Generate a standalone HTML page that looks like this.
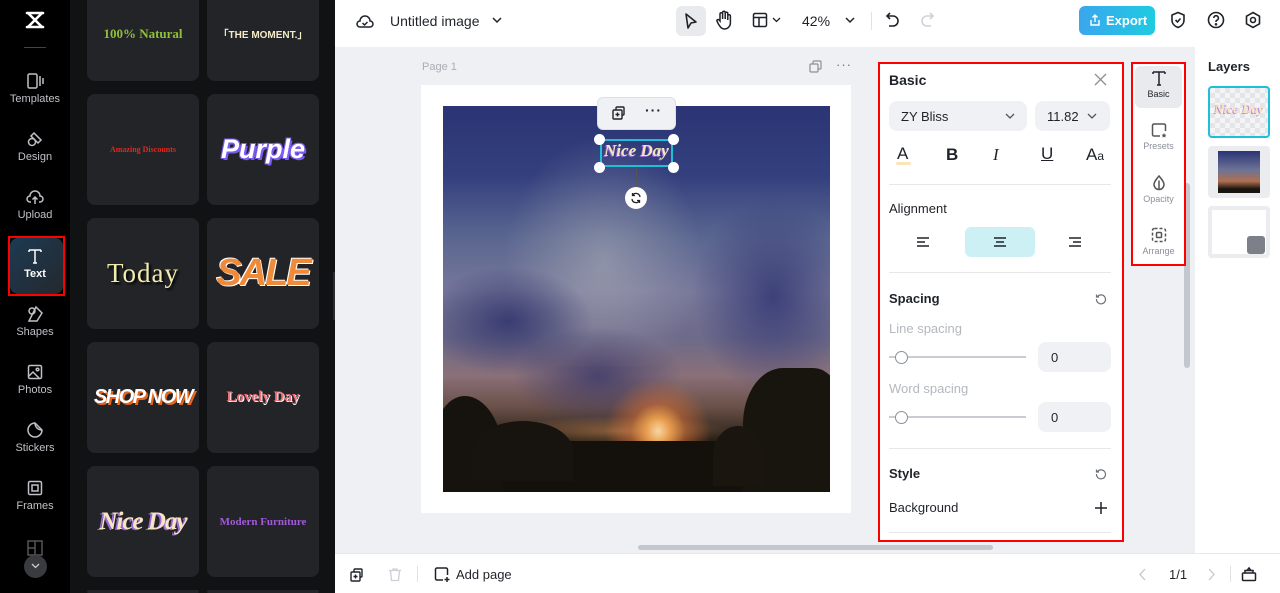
<!DOCTYPE html>
<html style="width:1280px;height:593px;overflow:hidden"><head><meta charset="utf-8"><style>
*{box-sizing:border-box;margin:0;padding:0}
body{width:1280px;height:593px;overflow:hidden;position:relative;font-family:"Liberation Sans",sans-serif;background:#fff}
.a{position:absolute}
.nav{left:0;top:0;width:70px;height:593px;background:#000}
.ni{position:absolute;left:0;width:70px;text-align:center;color:#bfc1c6;font-size:11px}
.ni svg{display:block;margin:0 auto 3px}
.panel{left:70px;top:0;width:265px;height:593px;background:#111214;overflow:hidden}
.card{position:absolute;width:112px;height:111px;background:#232428;border-radius:8px;display:flex;align-items:center;justify-content:center;text-align:center}
.top{left:335px;top:0;width:945px;height:47px;background:#fff}
.canvas{left:335px;top:47px;width:860px;height:506px;background:#eef0f3;overflow:hidden}
.bot{left:335px;top:553px;width:945px;height:40px;background:#fff;border-top:1px solid #e6e8eb}
.prop{left:878px;top:62px;width:246px;height:480px;background:#fff;border:2px solid #f00}
.lbl{position:absolute;font-size:13px;color:#1f2329}
.hr{position:absolute;left:9px;width:222px;height:1px;background:#e5e7eb}
.box{position:absolute;background:#eff1f4;border-radius:8px;font-size:13px;color:#1f2329}
.sl{position:absolute;left:9px;width:137px;height:2px;background:#c9ccd3}
.knob{position:absolute;width:13px;height:13px;border-radius:50%;background:#fff;border:1px solid #8a8f99}
.tabs{left:1131px;top:62px;width:55px;height:204px;background:#fff;border:2px solid #f00}
.tab{position:absolute;left:2px;width:47px;text-align:center;font-size:9px;color:#8a8f99}
.tab svg{display:block;margin:0 auto 2px}
</style></head><body>

<!-- left nav -->
<div class="a nav">
  <svg class="a" style="left:24px;top:10px" width="22" height="20" viewBox="0 0 22 20"><path d="M3 3h16M3 17h16M4 3l14 14M18 3L4 17" stroke="#fff" stroke-width="2.6" fill="none" stroke-linecap="round"/></svg>
  <div class="a" style="left:24px;top:47px;width:22px;height:1px;background:#444"></div>
  <div class="ni" style="top:72px"><svg width="18" height="18" viewBox="0 0 18 18" fill="none" stroke="#bfc1c6" stroke-width="1.5"><rect x="2" y="2" width="9" height="14" rx="1.5"/><path d="M14 4v10M17 6v6"/></svg>Templates</div>
  <div class="ni" style="top:130px"><svg width="18" height="18" viewBox="0 0 18 18" fill="none" stroke="#bfc1c6" stroke-width="1.5"><circle cx="6" cy="12" r="3.5"/><path d="M8 3l7 7-3 3-7-7z"/></svg>Design</div>
  <div class="ni" style="top:188px"><svg width="18" height="18" viewBox="0 0 18 18" fill="none" stroke="#bfc1c6" stroke-width="1.5"><path d="M5 14H4a3 3 0 0 1 0-6 5 5 0 0 1 10 0 3 3 0 0 1 0 6h-1M9 16V9M6.5 11.5L9 9l2.5 2.5"/></svg>Upload</div>
  <div class="a" style="left:8px;top:236px;width:57px;height:60px;border:2px solid #f00"></div>
  <div class="a" style="left:10px;top:238px;width:53px;height:56px;border-radius:8px;background:linear-gradient(135deg,#1d3a52,#24282e)"></div>
  <div class="ni" style="top:247px;color:#fff;font-weight:bold"><svg width="18" height="18" viewBox="0 0 18 18" fill="none" stroke="#fff" stroke-width="1.5"><path d="M3 3h12M9 3v13M3 3v2M15 3v2M7 16h4"/></svg>Text</div>
  <div class="ni" style="top:305px"><svg width="18" height="18" viewBox="0 0 18 18" fill="none" stroke="#bfc1c6" stroke-width="1.5"><path d="M10 2l6 6-5 8H3z"/><circle cx="6" cy="6" r="3"/></svg>Shapes</div>
  <div class="ni" style="top:363px"><svg width="18" height="18" viewBox="0 0 18 18" fill="none" stroke="#bfc1c6" stroke-width="1.5"><rect x="2.5" y="2.5" width="13" height="13" rx="1.5"/><path d="M3 13l4-4 6 6"/><circle cx="11.5" cy="6.5" r="1.3"/></svg>Photos</div>
  <div class="ni" style="top:421px"><svg width="18" height="18" viewBox="0 0 18 18" fill="none" stroke="#bfc1c6" stroke-width="1.5"><path d="M16 9A7 7 0 1 1 9 2l7 7z"/><path d="M9 2c0 4 3 7 7 7"/></svg>Stickers</div>
  <div class="ni" style="top:479px"><svg width="18" height="18" viewBox="0 0 18 18" fill="none" stroke="#bfc1c6" stroke-width="1.5"><rect x="2.5" y="2.5" width="13" height="13" rx="1.5"/><rect x="6" y="6" width="6" height="6"/></svg>Frames</div>
  <svg class="a" style="left:27px;top:540px" width="16" height="16" viewBox="0 0 16 16" fill="none" stroke="#555" stroke-width="1.5"><rect x="1" y="1" width="14" height="14"/><path d="M8 1v14M1 8h7"/></svg>
  <div class="a" style="left:24px;top:555px;width:23px;height:23px;border-radius:50%;background:#3a3b40"></div>
  <svg class="a" style="left:31px;top:563px" width="9" height="6" viewBox="0 0 9 6"><path d="M1 1l3.5 3.5L8 1" stroke="#ccc" stroke-width="1.3" fill="none"/></svg>
</div>

<!-- text template panel -->
<div class="a panel">
  <div class="card" style="left:17px;top:-30px;padding-top:56px"><span style="font-family:'Liberation Serif',serif;font-weight:bold;color:#8fc03a;font-size:13px;align-self:flex-start">100% Natural</span></div>
  <div class="card" style="left:137px;top:-30px;padding-top:56px"><span style="font-weight:bold;color:#f3ecc8;font-size:10px;align-self:flex-start">「THE MOMENT.」</span></div>
  <div class="card" style="left:17px;top:94px"><span style="font-family:'Liberation Serif',serif;font-weight:bold;color:#e0281e;font-size:8px">Amazing Discounts</span></div>
  <div class="card" style="left:137px;top:94px"><span style="font-weight:bold;font-style:italic;color:#fff;font-size:27px;text-shadow:2px 2px 0 #7b5cf0,-1px -1px 0 #7b5cf0,1px -1px 0 #7b5cf0,-1px 1px 0 #7b5cf0">Purple</span></div>
  <div class="card" style="left:17px;top:218px"><span style="font-family:'Liberation Serif',serif;color:#f3ecb0;font-size:27px;letter-spacing:1px;text-shadow:2px 2px 2px #000">Today</span></div>
  <div class="card" style="left:137px;top:218px"><span style="font-weight:bold;font-style:italic;color:#ef8a3a;font-size:38px;letter-spacing:-2px;text-shadow:1px 1px 0 #fff,-1px -1px 0 #fff">SALE</span></div>
  <div class="card" style="left:17px;top:342px"><span style="font-weight:bold;font-style:italic;color:#fff;font-size:20px;letter-spacing:-1.5px;text-shadow:2px 2px 0 #e9651a">SHOP NOW</span></div>
  <div class="card" style="left:137px;top:342px"><span style="font-family:'Liberation Serif',serif;font-weight:bold;color:#f16f77;font-size:15px;text-shadow:1px 1px 0 #fff">Lovely Day</span></div>
  <div class="card" style="left:17px;top:466px"><span style="font-family:'Liberation Serif',serif;font-weight:bold;font-style:italic;color:#f6e5c0;font-size:25px;letter-spacing:-1px;text-shadow:-2px 1px 0 #9a6ad8">Nice Day</span></div>
  <div class="card" style="left:137px;top:466px"><span style="font-family:'Liberation Serif',serif;font-weight:bold;color:#a259d9;font-size:11px">Modern Furniture</span></div>
  <div class="card" style="left:17px;top:590px;height:3px"></div>
  <div class="card" style="left:137px;top:590px;height:3px"></div>
</div>
<div class="a" style="left:333px;top:272px;width:7px;height:48px;background:#2a2b2f;border-radius:0 4px 4px 0"></div>

<!-- top bar -->
<div class="a top">
  <svg class="a" style="left:21px;top:12px" width="18" height="18" viewBox="0 0 18 18" fill="none" stroke="#1f2329" stroke-width="1.5"><path d="M5 15H4a3 3 0 0 1 0-6 5 5 0 0 1 10 0 3 3 0 0 1 0 6H5z"/><path d="M6.5 11l2 2 3-3"/></svg>
  <div class="a" style="left:55px;top:13px;font-size:14px;color:#1f2329">Untitled image</div>
  <svg class="a" style="left:157px;top:17px" width="10" height="7" viewBox="0 0 10 7"><path d="M1 1l4 4 4-4" stroke="#1f2329" stroke-width="1.5" fill="none"/></svg>
  <div class="a" style="left:341px;top:6px;width:30px;height:30px;border-radius:6px;background:#e8eaee"></div>
  <svg class="a" style="left:348px;top:12px" width="16" height="18" viewBox="0 0 16 18"><path d="M3 2l10 8-5 1-3 5z" stroke="#1f2329" stroke-width="1.6" fill="none" stroke-linejoin="round"/></svg>
  <svg class="a" style="left:380px;top:10px" width="18" height="20" viewBox="0 0 18 20" fill="none" stroke="#1f2329" stroke-width="1.5"><path d="M5 11V4a1.3 1.3 0 0 1 2.6 0v5V2.5a1.3 1.3 0 0 1 2.6 0V9V3.5a1.3 1.3 0 0 1 2.6 0V10V6a1.3 1.3 0 0 1 2.6 0v7a6 6 0 0 1-6 6c-3 0-4-2-6-5l-1.5-3a1.3 1.3 0 0 1 2.3-1z"/></svg>
  <svg class="a" style="left:417px;top:12px" width="16" height="16" viewBox="0 0 16 16" fill="none" stroke="#1f2329" stroke-width="1.5"><rect x="1.5" y="1.5" width="13" height="13" rx="1.5"/><path d="M1.5 5.5h13M7 5.5v9"/></svg>
  <svg class="a" style="left:437px;top:17px" width="9" height="6" viewBox="0 0 9 6"><path d="M1 1l3.5 3.5L8 1" stroke="#1f2329" stroke-width="1.3" fill="none"/></svg>
  <div class="a" style="left:467px;top:13px;font-size:14px;color:#1f2329">42%</div>
  <svg class="a" style="left:510px;top:17px" width="10" height="7" viewBox="0 0 10 7"><path d="M1 1l4 4 4-4" stroke="#1f2329" stroke-width="1.5" fill="none"/></svg>
  <div class="a" style="left:536px;top:12px;width:1px;height:18px;background:#e0e2e6"></div>
  <svg class="a" style="left:550px;top:11px" width="16" height="18" viewBox="0 0 16 18" fill="none" stroke="#1f2329" stroke-width="1.6"><path d="M5 2L2 5l3 3M2 5h6a5 5 0 0 1 0 10H4"/></svg>
  <svg class="a" style="left:584px;top:11px" width="16" height="18" viewBox="0 0 16 18" fill="none" stroke="#cfd2d8" stroke-width="1.6"><path d="M11 2l3 3-3 3M14 5H8a5 5 0 0 0 0 10h4"/></svg>
  <div class="a" style="left:744px;top:6px;width:76px;height:29px;border-radius:6px;background:linear-gradient(90deg,#3aa6ee,#1ecbe1);color:#fff;font-size:13px;font-weight:bold;padding:7px 0 0 27px">Export</div>
  <svg class="a" style="left:754px;top:13px" width="12" height="14" viewBox="0 0 12 14" fill="none" stroke="#fff" stroke-width="1.4"><path d="M6 9V2M3.5 4.5L6 2l2.5 2.5M2 7v5h8V7"/></svg>
  <svg class="a" style="left:835px;top:11px" width="16" height="18" viewBox="0 0 16 18" fill="none" stroke="#1f2329" stroke-width="1.6"><path d="M8 1.5l6 2.5v5c0 4-3 6.5-6 7.5-3-1-6-3.5-6-7.5V4z"/><path d="M5.5 9l2 2 3-3.5"/></svg>
  <svg class="a" style="left:872px;top:11px" width="18" height="18" viewBox="0 0 18 18" fill="none" stroke="#1f2329" stroke-width="1.6"><circle cx="9" cy="9" r="7.5"/><path d="M6.8 7a2.3 2.3 0 1 1 3 2.2c-.6.3-.8.7-.8 1.3v.5"/><circle cx="9" cy="13.3" r=".5" fill="#1f2329"/></svg>
  <svg class="a" style="left:909px;top:11px" width="18" height="18" viewBox="0 0 18 18" fill="none" stroke="#1f2329" stroke-width="1.6"><path d="M9 1.5l6.5 3.7v7.6L9 16.5l-6.5-3.7V5.2z"/><circle cx="9" cy="9" r="2.5"/></svg>
</div>

<!-- canvas -->
<div class="a canvas">
  <div class="a" style="left:87px;top:14px;font-size:11px;color:#a9adb5">Page 1</div>
  <svg class="a" style="left:474px;top:13px" width="13" height="13" viewBox="0 0 13 13" fill="none" stroke="#8a8f99" stroke-width="1.2"><rect x="1" y="4" width="8" height="8" rx="1"/><path d="M4 4V2a1 1 0 0 1 1-1h6a1 1 0 0 1 1 1v6a1 1 0 0 1-1 1H9"/></svg>
  <div class="a" style="left:501px;top:10px;font-size:13px;color:#6b7079;letter-spacing:1px">···</div>
  <div class="a" style="left:86px;top:38px;width:430px;height:428px;background:#fff"></div>
  <div class="a" style="left:108px;top:59px;width:387px;height:386px;overflow:hidden;background:linear-gradient(180deg,#2b3474 0%,#34407e 18%,#5a6690 34%,#76779a 48%,#6d6a8a 60%,#8a7078 70%,#6a5048 78%,#2a2218 86%,#16130e 100%)">
    <div class="a" style="left:60px;top:30px;width:200px;height:230px;background:radial-gradient(ellipse at 50% 55%,rgba(190,190,190,.45),transparent 70%)"></div>
    <div class="a" style="left:250px;top:90px;width:160px;height:200px;background:radial-gradient(ellipse,rgba(50,55,115,.85),transparent 70%)"></div>
    <div class="a" style="left:-20px;top:160px;width:170px;height:110px;background:radial-gradient(ellipse,rgba(48,52,108,.85),transparent 70%)"></div>
    <div class="a" style="left:70px;top:220px;width:170px;height:100px;background:radial-gradient(ellipse,rgba(58,56,105,.8),transparent 70%)"></div>
    <div class="a" style="left:150px;top:270px;width:130px;height:110px;background:radial-gradient(circle,rgba(255,240,190,1) 0%,rgba(250,170,80,.9) 14%,rgba(220,110,50,.5) 32%,transparent 62%)"></div>
    <div class="a" style="left:60px;top:310px;width:230px;height:30px;background:radial-gradient(ellipse,rgba(230,150,90,.45),transparent 70%)"></div>
    <div class="a" style="left:0;top:335px;width:387px;height:51px;background:#14110c"></div>
    <div class="a" style="left:-10px;top:290px;width:70px;height:110px;border-radius:45% 55% 0 0;background:#16130e"></div>
    <div class="a" style="left:30px;top:315px;width:100px;height:60px;border-radius:50% 50% 0 0;background:#17140f"></div>
    <div class="a" style="left:300px;top:262px;width:100px;height:140px;border-radius:40% 30% 0 0;background:#18150f"></div>
    <div class="a" style="left:270px;top:320px;width:50px;height:60px;border-radius:50% 50% 0 0;background:#1a160f"></div>
  </div>
  <div class="a" style="left:262px;top:50px;width:79px;height:33px;border-radius:6px;background:#f0f1f4;border:1px solid #dcdfe4"></div>
  <svg class="a" style="left:277px;top:59px" width="14" height="14" viewBox="0 0 14 14" fill="none" stroke="#1f2329" stroke-width="1.4"><rect x="1" y="4" width="9" height="9" rx="1"/><path d="M4 4V2a1 1 0 0 1 1-1h6a1 1 0 0 1 1 1v6a1 1 0 0 1-1 1h-1M5.5 6.5v4M3.5 8.5h4"/></svg>
  <div class="a" style="left:310px;top:55px;font-size:14px;color:#1f2329;font-weight:bold;letter-spacing:1px">···</div>
  <div class="a" style="left:265px;top:92px;width:73px;height:28px;border:2px solid #1ec0d9"></div>
  <div class="a" style="left:266px;top:94px;width:71px;text-align:center;font-family:'Liberation Serif',serif;font-style:italic;font-weight:bold;font-size:17px;color:#f6e5c0;text-shadow:-1px 1px 0 #9a6ad8">Nice Day</div>
  <div class="a" style="left:259px;top:87px;width:11px;height:11px;border-radius:50%;background:#fff"></div>
  <div class="a" style="left:333px;top:87px;width:11px;height:11px;border-radius:50%;background:#fff"></div>
  <div class="a" style="left:259px;top:115px;width:11px;height:11px;border-radius:50%;background:#fff"></div>
  <div class="a" style="left:333px;top:115px;width:11px;height:11px;border-radius:50%;background:#fff"></div>
  <div class="a" style="left:301px;top:120px;width:1px;height:20px;background:#555"></div>
  <div class="a" style="left:290px;top:140px;width:22px;height:22px;border-radius:50%;background:#fff"></div>
  <svg class="a" style="left:295px;top:145px" width="12" height="12" viewBox="0 0 12 12" fill="none" stroke="#1f2329" stroke-width="1.3"><path d="M10 5a4 4 0 0 0-7.5-1.5M2 7a4 4 0 0 0 7.5 1.5M2.5 1v2.5H5M9.5 11V8.5H7"/></svg>
  <div class="a" style="left:303px;top:498px;width:355px;height:5px;border-radius:3px;background:#c4c7cd"></div>
  <div class="a" style="left:849px;top:136px;width:6px;height:185px;border-radius:3px;background:#c4c7cd"></div>
</div>

<!-- property panel -->
<div class="a prop">
  <div class="lbl" style="left:9px;top:8px;font-size:14px;font-weight:bold">Basic</div>
  <svg class="a" style="left:214px;top:9px" width="13" height="13" viewBox="0 0 13 13"><path d="M1 1l11 11M12 1L1 12" stroke="#8a8f99" stroke-width="1.3"/></svg>
  <div class="box" style="left:9px;top:37px;width:138px;height:30px;padding:8px 12px">ZY Bliss</div>
  <svg class="a" style="left:125px;top:49px" width="10" height="7" viewBox="0 0 10 7"><path d="M1 1l4 4 4-4" stroke="#555" stroke-width="1.3" fill="none"/></svg>
  <div class="box" style="left:155px;top:37px;width:75px;height:30px;padding:8px 12px">11.82</div>
  <svg class="a" style="left:207px;top:49px" width="10" height="7" viewBox="0 0 10 7"><path d="M1 1l4 4 4-4" stroke="#555" stroke-width="1.3" fill="none"/></svg>
  <div class="lbl" style="left:17px;top:80px;font-size:17px">A</div>
  <div class="a" style="left:16px;top:98px;width:15px;height:3px;border-radius:2px;background:#fde3b8"></div>
  <div class="lbl" style="left:66px;top:81px;font-size:17px;font-weight:bold">B</div>
  <div class="lbl" style="left:113px;top:81px;font-size:17px;font-family:'Liberation Serif',serif;font-style:italic">I</div>
  <div class="lbl" style="left:161px;top:80px;font-size:17px;text-decoration:underline">U</div>
  <div class="lbl" style="left:206px;top:81px;font-size:17px">A<span style="font-size:12px">a</span></div>
  <div class="hr" style="top:120px"></div>
  <div class="lbl" style="left:9px;top:137px">Alignment</div>
  <div class="a" style="left:85px;top:163px;width:70px;height:30px;border-radius:6px;background:#cdf0f5"></div>
  <svg class="a" style="left:35px;top:172px" width="16" height="12" viewBox="0 0 16 12" stroke="#1f2329" stroke-width="1.5"><path d="M2 2h12M2 6h8M2 10h12"/></svg>
  <svg class="a" style="left:112px;top:172px" width="16" height="12" viewBox="0 0 16 12" stroke="#1f2329" stroke-width="1.5"><path d="M2 2h12M4 6h8M2 10h12"/></svg>
  <svg class="a" style="left:187px;top:172px" width="16" height="12" viewBox="0 0 16 12" stroke="#1f2329" stroke-width="1.5"><path d="M2 2h12M6 6h8M2 10h12"/></svg>
  <div class="hr" style="top:208px"></div>
  <div class="lbl" style="left:9px;top:227px;font-weight:bold">Spacing</div>
  <svg class="a" style="left:215px;top:229px" width="12" height="12" viewBox="0 0 12 12" fill="none" stroke="#6b7079" stroke-width="1.2"><path d="M2.5 3.5A4.5 4.5 0 1 1 1.5 6M1.5 1.5v2.5H4"/></svg>
  <div class="lbl" style="left:9px;top:257px;color:#b4b8bf">Line spacing</div>
  <div class="sl" style="top:292px"></div>
  <div class="knob" style="left:15px;top:287px"></div>
  <div class="box" style="left:158px;top:278px;width:73px;height:30px;padding:8px 13px">0</div>
  <div class="lbl" style="left:9px;top:317px;color:#b4b8bf">Word spacing</div>
  <div class="sl" style="top:352px"></div>
  <div class="knob" style="left:15px;top:347px"></div>
  <div class="box" style="left:158px;top:338px;width:73px;height:30px;padding:8px 13px">0</div>
  <div class="hr" style="top:384px"></div>
  <div class="lbl" style="left:9px;top:402px;font-weight:bold">Style</div>
  <svg class="a" style="left:215px;top:404px" width="12" height="12" viewBox="0 0 12 12" fill="none" stroke="#6b7079" stroke-width="1.2"><path d="M2.5 3.5A4.5 4.5 0 1 1 1.5 6M1.5 1.5v2.5H4"/></svg>
  <div class="lbl" style="left:9px;top:436px">Background</div>
  <svg class="a" style="left:214px;top:437px" width="14" height="14" viewBox="0 0 14 14" stroke="#1f2329" stroke-width="1.5"><path d="M7 1v12M1 7h12"/></svg>
  <div class="hr" style="top:468px"></div>
</div>

<!-- tabs -->
<div class="a tabs">
  <div class="a" style="left:2px;top:2px;width:47px;height:42px;border-radius:6px;background:#e8eaee"></div>
  <div class="tab" style="top:5px;color:#1f2329"><svg width="18" height="18" viewBox="0 0 18 18" fill="none" stroke="#1f2329" stroke-width="1.5"><path d="M3 3h12M9 3v13M3 3v2M15 3v2M7 16h4"/></svg>Basic</div>
  <div class="tab" style="top:57px"><svg width="18" height="18" viewBox="0 0 18 18" fill="none" stroke="#555" stroke-width="1.5"><path d="M10 15H4a1.5 1.5 0 0 1-1.5-1.5v-9A1.5 1.5 0 0 1 4 3h10a1.5 1.5 0 0 1 1.5 1.5V10"/><path d="M14 12l.8 1.6 1.7.2-1.3 1.1.4 1.7-1.6-.9-1.6.9.4-1.7-1.300-1.1 1.7-.2z" fill="#555" stroke="none"/></svg>Presets</div>
  <div class="tab" style="top:110px"><svg width="18" height="18" viewBox="0 0 18 18" fill="none" stroke="#555" stroke-width="1.5"><path d="M9 2c3 3.5 5 6 5 8.5a5 5 0 0 1-10 0C4 8 6 5.5 9 2z"/><path d="M9 15.5v-9" /></svg>Opacity</div>
  <div class="tab" style="top:162px"><svg width="18" height="18" viewBox="0 0 18 18" fill="none" stroke="#555" stroke-width="1.5"><rect x="2.5" y="2.5" width="13" height="13" rx="2" stroke-dasharray="3 2"/><rect x="6.5" y="6.5" width="5" height="5" rx="1"/></svg>Arrange</div>
</div>

<!-- layers -->
<div class="a" style="left:1195px;top:47px;width:85px;height:506px;background:#fff"></div>
<div class="a" style="left:1208px;top:59px;font-size:13px;font-weight:bold;color:#1f2329">Layers</div>
<div class="a" style="left:1208px;top:86px;width:62px;height:52px;border:2px solid #1ec0d9;border-radius:4px;background:repeating-conic-gradient(#e4e5e8 0 25%,#f4f4f6 0 50%) 0 0/10px 10px"></div>
<div class="a" style="left:1210px;top:101px;width:58px;text-align:center;font-family:'Liberation Serif',serif;font-style:italic;font-weight:bold;font-size:13px;color:#f6e5c0;text-shadow:-1px 1px 0 #c08ad8">Nice Day</div>
<div class="a" style="left:1208px;top:146px;width:62px;height:52px;border-radius:4px;background:#eaecef"></div>
<div class="a" style="left:1218px;top:151px;width:42px;height:42px;background:linear-gradient(180deg,#2b3474,#6d7396 45%,#b07050 72%,#1a160f 90%)"></div>
<div class="a" style="left:1208px;top:206px;width:62px;height:52px;border-radius:4px;background:#eaecef"></div>
<div class="a" style="left:1212px;top:210px;width:54px;height:44px;background:#fff"></div>
<div class="a" style="left:1247px;top:236px;width:18px;height:18px;border-radius:3px;background:#7d8088"></div>

<!-- bottom bar -->
<div class="a bot">
  <svg class="a" style="left:15px;top:14px" width="14" height="14" viewBox="0 0 14 14" fill="none" stroke="#1f2329" stroke-width="1.4"><rect x="1" y="4" width="9" height="9" rx="1"/><path d="M4 4V2a1 1 0 0 1 1-1h6a1 1 0 0 1 1 1v6a1 1 0 0 1-1 1h-1M5.5 6.5v4M3.5 8.5h4"/></svg>
  <svg class="a" style="left:53px;top:13px" width="14" height="15" viewBox="0 0 14 15" fill="none" stroke="#ccd0d6" stroke-width="1.3"><path d="M1 3.5h12M5 3.5V2h4v1.5M2.5 3.5l1 10h7l1-10"/></svg>
  <div class="a" style="left:82px;top:12px;width:1px;height:16px;background:#e0e2e6"></div>
  <svg class="a" style="left:99px;top:12px" width="17" height="17" viewBox="0 0 17 17" fill="none" stroke="#1f2329" stroke-width="1.5"><path d="M9 14H3a1.5 1.5 0 0 1-1.5-1.5v-9A1.5 1.5 0 0 1 3 2h9a1.5 1.5 0 0 1 1.5 1.5V9M13 11v5M10.5 13.5h5"/></svg>
  <div class="a" style="left:121px;top:13px;font-size:13px;color:#1f2329">Add page</div>
  <svg class="a" style="left:803px;top:14px" width="8" height="13" viewBox="0 0 8 13"><path d="M7 1L2 6.5 7 12" stroke="#c4c7cd" stroke-width="1.3" fill="none"/></svg>
  <div class="a" style="left:834px;top:13px;font-size:13px;color:#1f2329">1/1</div>
  <svg class="a" style="left:873px;top:14px" width="8" height="13" viewBox="0 0 8 13"><path d="M1 1l5 5.5L1 12" stroke="#c4c7cd" stroke-width="1.3" fill="none"/></svg>
  <div class="a" style="left:895px;top:12px;width:1px;height:16px;background:#e0e2e6"></div>
  <svg class="a" style="left:906px;top:12px" width="16" height="16" viewBox="0 0 16 16" fill="none" stroke="#1f2329" stroke-width="1.5"><rect x="1.5" y="7" width="13" height="7.5" rx="1"/><path d="M4 7V4.5h8V7M6 4.5L8 2l2 2.5"/></svg>
</div>
</body></html>
